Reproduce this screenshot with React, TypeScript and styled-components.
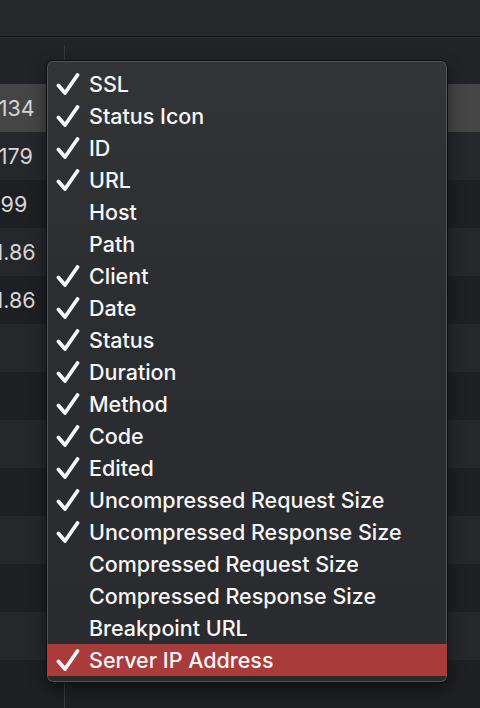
import React from "react";
import styled, { createGlobalStyle } from "styled-components";

const Global = createGlobalStyle`
  html, body { margin: 0; padding: 0; background: #1f2023; }
  body { font-family: Inter, "Noto Sans", "Liberation Sans", sans-serif; -webkit-font-smoothing: antialiased; }
`;

const Page = styled.div`
  position: relative;
  width: 480px;
  height: 708px;
  overflow: hidden;
  background: #1f2023;
`;

const TopBar = styled.div`
  height: 36px;
  background: #26272b;
  border-bottom: 1px solid #111214;
  box-shadow: inset 0 -1px 0 #2a2b2f;
`;

const Header = styled.div`
  height: 46px;
  background: #222327;
  border-top: 1px solid #2f3034;
  display: flex;
`;

const HeaderCell = styled.div`
  width: 64px;
  margin-top: 7px;
  border-right: 1px solid #3a3b3e;
`;

const Table = styled.div`
  display: flex;
  flex-direction: column;
`;

const Row = styled.div<{ $tone: "sel" | "a" | "b" }>`
  height: 48px;
  display: flex;
  background: ${(p) => (p.$tone === "sel" ? "#454545" : p.$tone === "a" ? "#26272b" : "#1e1f22")};
`;

/* the table is scrolled horizontally, so the address column starts left of the view */
const Cell = styled.div`
  width: 64px;
  display: flex;
  align-items: center;
  overflow: hidden;
  white-space: nowrap;
  color: #d6d6d8;
  font-size: 21.5px;
  border-right: 1px solid #3a3b3e;
`;

const Scrolled = styled.span`
  margin-left: -59px;
`;

const Menu = styled.div`
  position: absolute;
  left: 46px;
  top: 60px;
  width: 402px;
  height: 623px;
  box-sizing: border-box;
  padding: 7px 0 8px;
  border-radius: 7px;
  background: linear-gradient(180deg, #333436 0%, #2c2d30 40%, #2a2b2e 100%);
  border: 1px solid #0e0f10;
  box-shadow: inset 0 0 0 1px #525356, 0 6px 16px rgba(0, 0, 0, 0.45);
  display: flex;
  flex-direction: column;
  overflow: hidden;
`;

const Item = styled.div<{ $active?: boolean }>`
  height: 32px;
  display: flex;
  align-items: center;
  background: ${(p) => (p.$active ? "#a93b3b" : "transparent")};
  color: #f6f6f7;
  font-size: 21.5px;
  font-weight: 450;
`;

const CheckSlot = styled.div`
  width: 42px;
  display: flex;
  justify-content: flex-end;
`;

const Label = styled.span`
  line-height: 32px;
`;

const Check = () => (
  <svg width="24" height="22" viewBox="0 0 24 22" style={{ marginRight: 9 }}>
    <path d="M2.5 12.5 L9 20 L21.5 2" fill="none" stroke="#f6f6f7" strokeWidth="3.8" strokeLinecap="round" strokeLinejoin="round" />
  </svg>
);

const items: [string, boolean][] = [
  ["SSL", true],
  ["Status Icon", true],
  ["ID", true],
  ["URL", true],
  ["Host", false],
  ["Path", false],
  ["Client", true],
  ["Date", true],
  ["Status", true],
  ["Duration", true],
  ["Method", true],
  ["Code", true],
  ["Edited", true],
  ["Uncompressed Request Size", true],
  ["Uncompressed Response Size", true],
  ["Compressed Request Size", false],
  ["Compressed Response Size", false],
  ["Breakpoint URL", false],
  ["Server IP Address", true],
];

const rows = ["10.0.1.134", "10.0.1.179", "10.0.1.99", "10.0.11.86", "10.0.11.86", "", "", "", "", "", "", "", ""];

export default function App() {
  return (
    <Page>
      <Global />
      <TopBar />
      <Header>
        <HeaderCell />
      </Header>
      <Table>
        {rows.map((r, i) => (
          <Row key={i} $tone={i === 0 ? "sel" : i % 2 === 1 ? "a" : "b"}>
            <Cell>
              <Scrolled>{r}</Scrolled>
            </Cell>
          </Row>
        ))}
      </Table>
      <Menu>
        {items.map(([label, on], i) => (
          <Item key={label} $active={i === items.length - 1}>
            <CheckSlot>{on && <Check />}</CheckSlot>
            <Label>{label}</Label>
          </Item>
        ))}
      </Menu>
    </Page>
  );
}
